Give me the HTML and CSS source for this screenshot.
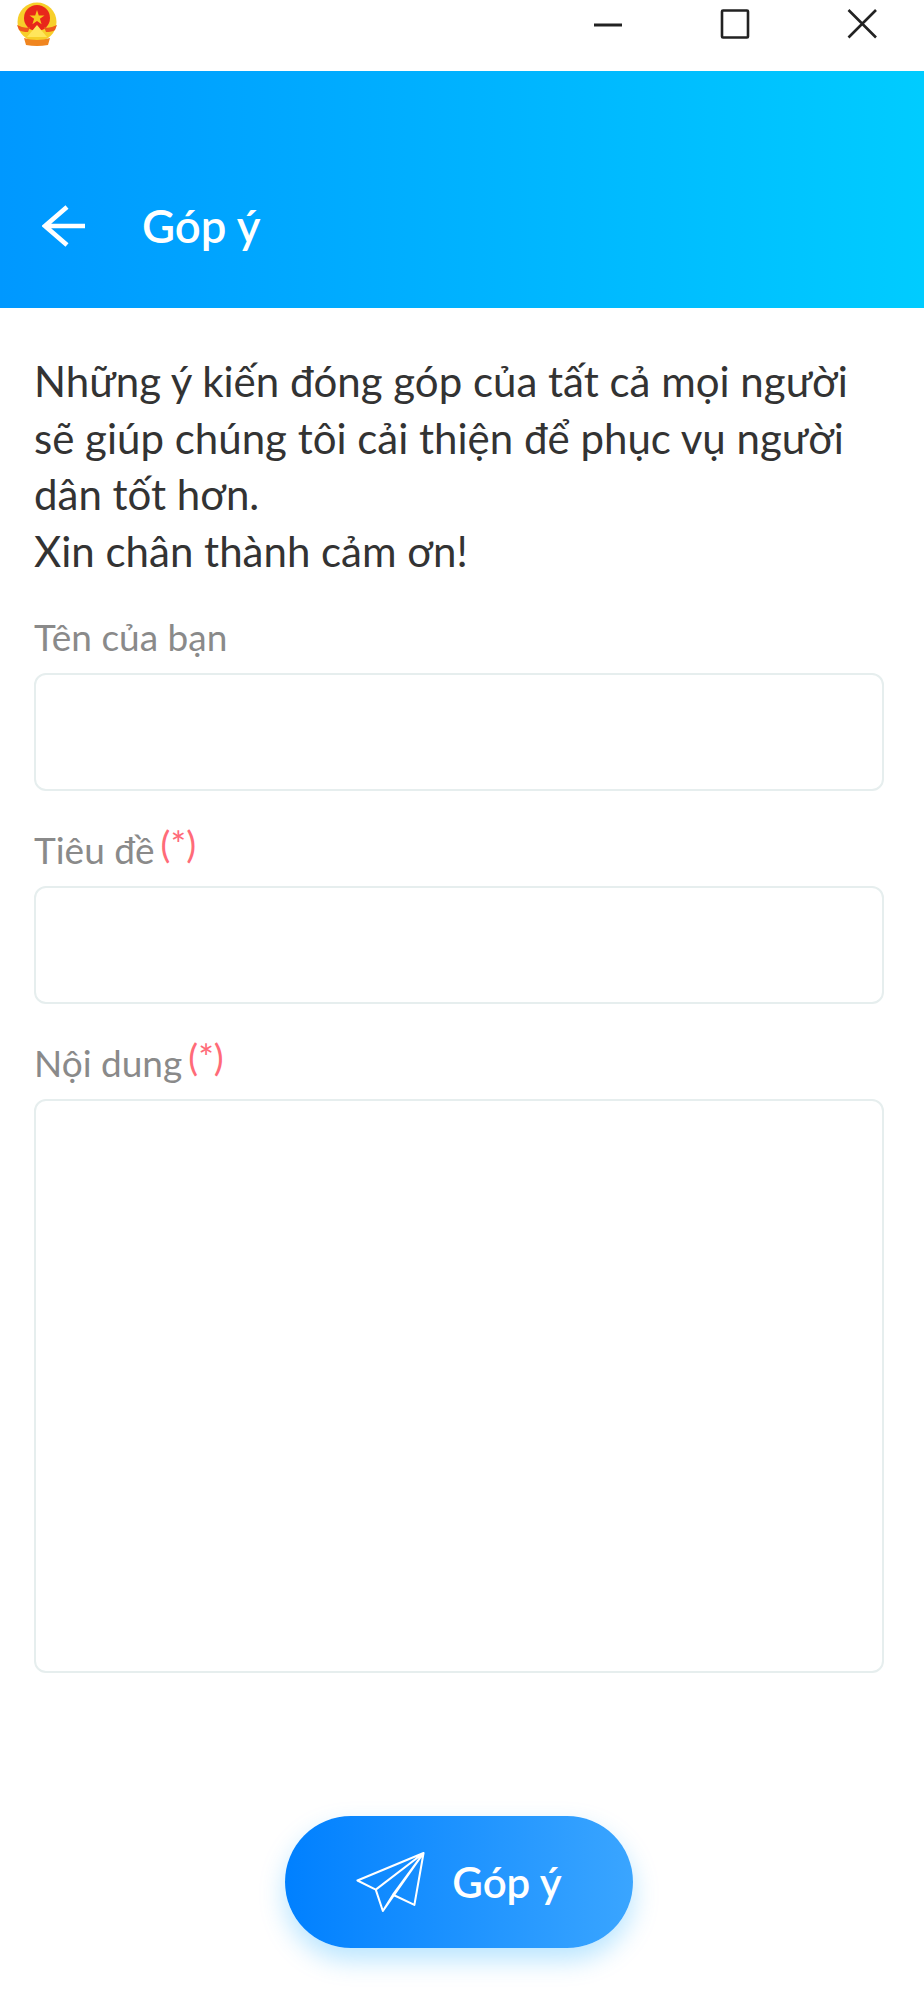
FILE: index.html
```html
<!DOCTYPE html>
<html lang="vi">
<head>
    <meta charset="UTF-8">
    <title>Góp ý</title>
    <link rel="stylesheet" href="styles.css">
</head>
<body>

<div class="titlebar">
    <svg class="app-logo" viewBox="0 0 40 44">
        <circle cx="20" cy="20" r="19.5" fill="#f7cf2a"/>
        <circle cx="20" cy="16" r="13" fill="#e8271b"/>
        <polygon points="20,8 21.8,13.5 27.5,13.5 22.9,16.8 24.6,22.2 20,18.9 15.4,22.2 17.1,16.8 12.5,13.5 18.2,13.5" fill="#f7c81e"/>
        <path d="M0 23 Q8 27 13 25 L11 30 Q5 30 2 28 Z M40 23 Q32 27 27 25 L29 30 Q35 30 38 28 Z" fill="#ee5a1c"/>
        <path d="M20 23 L30 35 H10 Z" fill="#ffe65c"/>
        <path d="M7 36 Q20 40 33 36 L31 43 Q20 45 9 43 Z" fill="#f0851f"/>
    </svg>
    <div class="window-buttons">
        <svg viewBox="0 0 32 32"><path d="M2 17H30" stroke="#222" stroke-width="3" fill="none"/></svg>
        <svg viewBox="0 0 32 32"><rect x="3" y="2.5" width="26" height="27" rx="1" stroke="#222" stroke-width="2.6" fill="none"/></svg>
        <svg viewBox="0 0 32 32"><path d="M2.5 2L30 29.5M30 2L2.5 29.5" stroke="#222" stroke-width="2.6" fill="none"/></svg>
    </div>
</div>

<header class="app-header">
    <svg class="back-icon" viewBox="0 0 44 42">
        <path d="M43 21H3M25 2L3 21L25 40" stroke="#fff" stroke-width="4.6" fill="none"/>
    </svg>
    <h1>Góp ý</h1>
</header>

<main class="content">
    <p class="intro">Những ý kiến đóng góp của tất cả mọi người sẽ giúp chúng tôi cải thiện để phục vụ người dân tốt hơn.<br>Xin chân thành cảm ơn!</p>

    <form class="feedback-form">
        <label class="field">
            <span class="field-label">Tên của bạn</span>
            <input type="text" class="input">
        </label>
        <label class="field">
            <span class="field-label">Tiêu đề<span class="required">(*)</span></span>
            <input type="text" class="input">
        </label>
        <label class="field">
            <span class="field-label">Nội dung<span class="required">(*)</span></span>
            <textarea class="input input-area"></textarea>
        </label>
        <button type="button" class="submit-button">
            <svg class="send-icon" viewBox="1 0 68 59">
                <path d="M67 1L2 28L20 37ZM67 1L58 52L37 42ZM67 1L27 58L20 37M27 58L37 42" stroke="#fff" stroke-width="2" stroke-linejoin="round" fill="none"/>
            </svg>
            Góp ý
        </button>
    </form>
</main>

</body>
</html>
```

FILE: styles.css
```css
html {
    height: 100%;
}
body {
    font-family: 'Lato', sans-serif;
    background-color: #fff;
    margin: 0;
    padding: 0;
    min-height: 100%;
}
.titlebar {
    height: 71px;
    display: flex;
    justify-content: space-between;
    padding: 2px 0 0 17px;
    box-sizing: border-box;
}
.app-logo {
    width: 40px;
    height: 44px;
}
.window-buttons {
    display: flex;
    gap: 95px;
    padding: 6px 46px 0 0;
}
.window-buttons svg {
    width: 32px;
    height: 32px;
}
.app-header {
    height: 237px;
    box-sizing: border-box;
    background: linear-gradient(to right, #0098ff, #00ccff);
    display: flex;
    align-items: flex-end;
    padding: 0 0 61px 42px;
    gap: 56px;
}
.back-icon {
    width: 44px;
    height: 42px;
}
.app-header h1 {
    color: #fff;
    font-size: 45.5px;
    font-weight: 600;
    line-height: 42px;
    margin: 0;
}
.content {
    padding: 45px 40px 0 34px;
}
.intro {
    font-size: 42px;
    line-height: 56.5px;
    color: #333;
    margin: 0 0 35px;
}
.field {
    display: block;
    margin-bottom: 36px;
}
.field-label {
    display: block;
    font-size: 37px;
    line-height: 46px;
    color: #8a8a8a;
    margin-bottom: 13px;
}
.required {
    color: #ff6b78;
    margin-left: 6px;
    vertical-align: 6px;
    line-height: 0;
}
.input {
    display: block;
    width: 100%;
    height: 118px;
    box-sizing: border-box;
    border: 2px solid #e6eeee;
    border-radius: 12px;
    background-color: #fff;
    outline: none;
    resize: none;
}
.input-area {
    height: 574px;
}
.submit-button {
    display: flex;
    align-items: center;
    justify-content: center;
    gap: 26px;
    width: 348px;
    height: 132px;
    margin: 143px auto 0;
    border: none;
    border-radius: 66px;
    background: linear-gradient(to right, #0080ff, #3aa5ff);
    box-shadow: 0 12px 26px rgba(0, 160, 255, 0.28);
    color: #fff;
    font-family: 'Lato', sans-serif;
    font-size: 42px;
    font-weight: 600;
}
.send-icon {
    width: 70px;
    height: 60px;
}
```
